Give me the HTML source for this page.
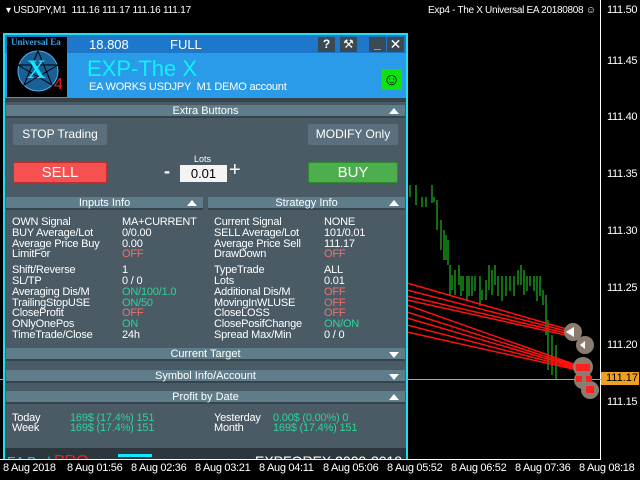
<!DOCTYPE html>
<html><head><meta charset="utf-8"><style>
*{margin:0;padding:0;box-sizing:border-box}
body{width:640px;height:480px;background:#000;position:relative;overflow:hidden;font-family:"Liberation Sans","DejaVu Sans",sans-serif;color:#fff}
.a{position:absolute;white-space:nowrap}
.t{font-size:11px;line-height:10.8px;color:#fff;letter-spacing:-0.2px}
.hd{position:absolute;height:13px;background:#5f7c8a;border-bottom:2px solid #34434c;font-size:11px;line-height:12px;text-align:center;color:#fff}
.tri{position:absolute;right:6px;top:3px;width:0;height:0;border-left:5px solid transparent;border-right:5px solid transparent}
.up{border-bottom:6px solid #fff}
.dn{border-top:6px solid #fff;top:4px}
.r{color:#f2706a}.g{color:#2fd29a}
.btn{position:absolute;background:#5b707c;font-size:12px;line-height:21px;text-align:center;color:#fff;border-radius:2px}
.px{font-size:11px;color:#fff;letter-spacing:-0.3px}
</style></head><body>
<div class="a" style="left:6px;top:5px;font-size:10px;letter-spacing:-0.2px">▾ USDJPY,M1 &nbsp;111.16 111.17 111.16 111.17</div>
<div class="a" style="left:428px;top:5px;font-size:10px;letter-spacing:-0.3px">Exp4 - The X Universal EA 20180808 ☺</div>
<div class="a" style="left:600px;top:0;width:1px;height:460px;background:#fff"></div>
<div class="a" style="left:0;top:459px;width:601px;height:1px;background:#fff"></div>
<div class="a px" style="left:607px;top:4px">111.50</div>
<div class="a px" style="left:607px;top:55px">111.45</div>
<div class="a px" style="left:607px;top:111px">111.40</div>
<div class="a px" style="left:607px;top:168px">111.35</div>
<div class="a px" style="left:607px;top:225px">111.30</div>
<div class="a px" style="left:607px;top:282px">111.25</div>
<div class="a px" style="left:607px;top:339px">111.20</div>
<div class="a px" style="left:607px;top:396px">111.15</div>
<div class="a" style="left:0;top:379px;width:601px;height:1px;background:#f0a020"></div>
<div class="a" style="left:601px;top:372px;width:38px;height:13px;background:#f0a020;color:#000;font-size:11px;line-height:13px;padding-left:5px">111.17</div>
<div class="a px" style="left:3px;top:462px">8 Aug 2018</div>
<div class="a px" style="left:67px;top:462px">8 Aug 01:56</div>
<div class="a px" style="left:131px;top:462px">8 Aug 02:36</div>
<div class="a px" style="left:195px;top:462px">8 Aug 03:21</div>
<div class="a px" style="left:259px;top:462px">8 Aug 04:11</div>
<div class="a px" style="left:323px;top:462px">8 Aug 05:06</div>
<div class="a px" style="left:387px;top:462px">8 Aug 05:52</div>
<div class="a px" style="left:451px;top:462px">8 Aug 06:52</div>
<div class="a px" style="left:515px;top:462px">8 Aug 07:36</div>
<div class="a px" style="left:579px;top:462px">8 Aug 08:18</div>
<svg class="a" style="left:0;top:0" width="600" height="459">
<g stroke="#22dd22" stroke-width="1">
<path d="M410 185v12M416 185v20M422 197v10M426 197v10M432 185v18M434 197v5M437 200v30M441 220v30M444 230v30M446 235v25M448 240v25M450 265v30M452 275v15M455 270v25M459 265v20M461 276v20M463 276v15M467 276v25M469 276v20M472 276v20M475 276v15M480 276v30M482 290v10M486 280v20M489 265v25M492 270v25M495 265v20M498 276v20M502 276v25M506 276v20M510 276v15M514 276v20M518 270v15M521 265v20M524 270v25M527 276v15M530 276v10M534 276v15M537 276v25M540 276v20M543 290v15M546 295v40M548 320v50M552 335v40M556 345v35"/>
</g>
<g stroke="#ff1010" stroke-width="1.5" fill="none">
<path d="M407 283L570 330M407 290L570 332M407 296L570 334M407 300L570 336M407 305L582 367M407 312L582 368M407 318L582 369M407 325L582 370M407 332L582 371"/>
</g>
<g fill="#8a7d70"><circle cx="573" cy="332" r="9"/><circle cx="585" cy="345" r="9"/><circle cx="583" cy="367" r="10"/><circle cx="583" cy="380" r="9"/><circle cx="590" cy="390" r="9"/></g>
<g fill="#fff"><path d="M566 332l8-5v10z"/><path d="M580 345l5-4v8z"/></g>
<g fill="#ff2020"><rect x="576" y="364" width="14" height="7"/><rect x="576" y="376" width="6" height="6"/><rect x="586" y="376" width="6" height="6"/><rect x="586" y="386" width="8" height="7"/></g>
</svg>
<div class="a" style="left:3px;top:33px;width:405px;height:426px;background:#4a5b66;border:2px solid #1ee0f0;border-bottom:none"></div>
<div class="a" style="left:5px;top:35px;width:401px;height:18px;background:#1d78cc"></div>
<div class="a" style="left:5px;top:53px;width:401px;height:45px;background:#2a9be9"></div>
<div class="a" style="left:5px;top:98px;width:401px;height:4px;background:#34434c"></div>
<div class="a" style="left:7px;top:37px;width:60px;height:60px;background:#000"></div>
<div class="a" style="left:11px;top:37px;font-family:'Liberation Serif',serif;font-size:9px;font-weight:bold;color:#3aa0e8">Universal Ea</div>
<svg class="a" style="left:14px;top:47px" width="48" height="48"><circle cx="24" cy="24" r="20" fill="#1a5f95" stroke="#4bb0f0"/><path d="M24 4L38 38L4 18h40L10 38z" stroke="#000" fill="none"/></svg>
<div class="a" style="left:27px;top:55px;font-family:'Liberation Serif',serif;font-size:26px;font-weight:bold;color:#10e8ff">X</div>
<div class="a" style="left:54px;top:76px;font-size:16px;color:#f02020">4</div>
<div class="a" style="left:89px;top:37px;font-size:13px">18.808</div>
<div class="a" style="left:170px;top:37px;font-size:13px">FULL</div>
<div class="a" style="left:318px;top:37px;width:17px;height:15px;background:#3a4a55;font-size:12px;text-align:center;font-weight:bold">?</div>
<div class="a" style="left:340px;top:37px;width:17px;height:15px;background:#3a4a55;font-size:12px;text-align:center">⚒</div>
<div class="a" style="left:369px;top:37px;width:17px;height:15px;background:#3a4a55;font-size:12px;text-align:center;font-weight:bold">_</div>
<div class="a" style="left:387px;top:37px;width:17px;height:15px;background:#3a4a55;font-size:14px;line-height:15px;text-align:center;font-weight:bold">✕</div>
<div class="a" style="left:87px;top:56px;font-size:22px;color:#10f0f8">EXP-The X</div>
<div class="a" style="left:89px;top:81px;font-size:11px;letter-spacing:-0.2px">EA WORKS USDJPY &nbsp;M1 DEMO account</div>
<div class="a" style="left:381px;top:69px;width:21px;height:21px;background:#11e011;color:#000;font-size:17px;line-height:21px;text-align:center">☺</div>
<div class="hd" style="left:6px;top:105px;width:399px">Extra Buttons<div class="tri up"></div></div>
<div class="btn" style="left:13px;top:124px;width:94px">STOP Trading</div>
<div class="btn" style="left:308px;top:124px;width:90px">MODIFY Only</div>
<div class="btn" style="left:13px;top:162px;width:94px;background:#f65050;border:1px solid #c03030;font-size:15px;line-height:19px">SELL</div>
<div class="btn" style="left:308px;top:162px;width:90px;background:#4cae4c;border:1px solid #2e8a2e;font-size:15px;line-height:19px">BUY</div>
<div class="a" style="left:194px;top:154px;font-size:9px">Lots</div>
<div class="a" style="left:164px;top:161px;font-size:18px;font-weight:bold">-</div>
<div class="a" style="left:180px;top:165px;width:47px;height:17px;background:#f4f4f4;color:#000;font-size:13px;line-height:17px;text-align:center">0.01</div>
<div class="a" style="left:229px;top:159px;font-size:20px">+</div>
<div class="hd" style="left:6px;top:197px;width:197px">Inputs Info<div class="tri up"></div></div>
<div class="hd" style="left:208px;top:197px;width:197px">Strategy Info<div class="tri up"></div></div>
<div class="a t" style="left:12px;top:217px">OWN Signal<br>BUY Average/Lot<br>Average Price Buy<br>LimitFor<div style="height:5px"></div>Shift/Reverse<br>SL/TP<br>Averaging Dis/M<br>TrailingStopUSE<br>CloseProfit<br>ONlyOnePos<br>TimeTrade/Close</div>
<div class="a t" style="left:122px;top:217px">MA+CURRENT<br>0/0.00<br>0.00<br><span class="r">OFF</span><div style="height:5px"></div>1<br>0 / 0<br><span class="g">ON/100/1.0</span><br><span class="g">ON/50</span><br><span class="r">OFF</span><br><span class="g">ON</span><br>24h</div>
<div class="a t" style="left:214px;top:217px">Current Signal<br>SELL Average/Lot<br>Average Price Sell<br>DrawDown<div style="height:5px"></div>TypeTrade<br>Lots<br>Additional Dis/M<br>MovingInWLUSE<br>CloseLOSS<br>ClosePosifChange<br>Spread Max/Min</div>
<div class="a t" style="left:324px;top:217px">NONE<br>101/0.01<br>111.17<br><span class="r">OFF</span><div style="height:5px"></div>ALL<br>0.01<br><span class="r">OFF</span><br><span class="r">OFF</span><br><span class="r">OFF</span><br><span class="g">ON/ON</span><br>0 / 0</div>
<div class="hd" style="left:6px;top:348px;width:399px">Current Target<div class="tri dn"></div></div>
<div class="hd" style="left:6px;top:370px;width:399px">Symbol Info/Account<div class="tri dn"></div></div>
<div class="hd" style="left:6px;top:391px;width:399px">Profit by Date<div class="tri up"></div></div>
<div class="a t" style="left:12px;top:413px;line-height:10px">Today<br>Week</div>
<div class="a t g" style="left:70px;top:413px;line-height:10px">169$ (17.4%) 151<br>169$ (17.4%) 151</div>
<div class="a t" style="left:214px;top:413px;line-height:10px">Yesterday<br>Month</div>
<div class="a t g" style="left:273px;top:413px;line-height:10px">0.00$ (0.00%) 0<br>169$ (17.4%) 151</div>
<div class="a" style="left:5px;top:448px;width:401px;height:11px;background:#2b363d;overflow:hidden">
<div class="a" style="left:2px;top:5px;font-size:13px;color:#20c0e0">EA Pad <span style="color:#f02020;font-size:16px">PRO</span></div>
<div class="a" style="left:113px;top:6px;width:34px;height:3px;background:#10e8ff"></div>
<div class="a" style="left:250px;top:5px;font-size:14px;color:#fff">EXPFOREX 2009-2018</div>
</div>
</body></html>
